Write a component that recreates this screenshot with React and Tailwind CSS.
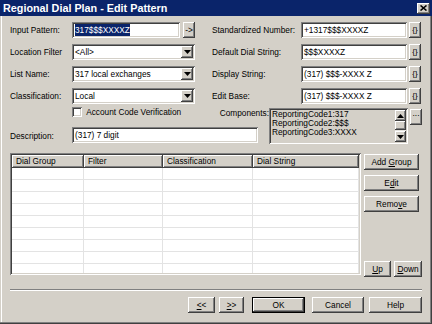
import React from 'react';

const raised = 'bg-[#d4d0c8] shadow-[inset_-1px_-1px_#404040,inset_1px_1px_#ffffff,inset_-2px_-2px_#808080,inset_2px_2px_#d4d0c8]';
const sunken = 'shadow-[inset_1px_1px_#808080,inset_-1px_-1px_#ffffff,inset_2px_2px_#404040,inset_-2px_-2px_#d4d0c8]';

function Btn({ className = '', children }) {
  return (
    <div className={`${raised} flex items-center justify-center h-[16px] ${className}`}>
      <span className="whitespace-pre">{children}</span>
    </div>
  );
}

function Arrow({ up }) {
  return (
    <svg width="7" height="4" viewBox="0 0 7 4">
      <path d={up ? 'M3.5 0 L7 4 L0 4 Z' : 'M0 0 L7 0 L3.5 4 Z'} fill="#000" />
    </svg>
  );
}

function TextBox({ className = '', children }) {
  return (
    <div className={`${sunken} bg-white h-[16px] flex items-center px-[3px] whitespace-nowrap overflow-hidden ${className}`}>
      {children}
    </div>
  );
}

function Select({ value }) {
  return (
    <div className={`${sunken} bg-white h-[16px] w-[123px] flex items-center pl-[3px] pr-[2px]`}>
      <span className="flex-1">{value}</span>
      <div className={`${raised} w-[12px] h-[12px] flex items-center justify-center`}>
        <Arrow />
      </div>
    </div>
  );
}

const rightRows = [
  ['Standardized Number:', '+1317$$$XXXXZ'],
  ['Default Dial String:', '$$$XXXXZ'],
  ['Display String:', '(317) $$$-XXXX Z'],
  ['Edit Base:', '(317) $$$-XXXX Z'],
];

const columns = [
  ['Dial Group', 'w-[72px]'],
  ['Filter', 'w-[79px]'],
  ['Classification', 'w-[90px]'],
  ['Dial String', 'w-[106px]'],
];

export default function App() {
  const leftRows = [
    ['Input Pattern:', (
      <div className="flex items-center gap-[3px]">
        <TextBox className="w-[108px]">
          <span className="bg-[#0a246a] text-white">317$$$XXXXZ</span>
        </TextBox>
        <Btn className="w-[12px] h-[15px]">-&gt;</Btn>
      </div>
    )],
    ['Location Filter', <Select value="<All>" />],
    ['List Name:', <Select value="317 local exchanges" />],
    ['Classification:', <Select value="Local" />],
  ];

  return (
    <div className="w-[432px] h-[324px] bg-[#d4d0c8] font-['Liberation_Sans',Arial,sans-serif] text-[8.3px] text-black overflow-hidden shadow-[inset_-1px_-1px_#404040,inset_-2px_-2px_#808080,inset_1px_1px_#d4d0c8,inset_2px_2px_#ffffff]">
      {/* title bar */}
      <div className="h-[16px] bg-[#0a246a] flex items-center justify-between pl-[3px] pr-[2px]">
        <span className="text-white font-bold text-[10.8px]">Regional Dial Plan - Edit Pattern</span>
        <div className={`${raised} w-[13px] h-[11px] flex items-center justify-center`}>
          <svg width="7" height="6" viewBox="0 0 7 6">
            <path d="M0.5 0.5 L6.5 5.5 M6.5 0.5 L0.5 5.5" stroke="#000" strokeWidth="1.6" />
          </svg>
        </div>
      </div>

      <div className="pl-[10px] pr-[10px]">
        {/* top field rows */}
        <div className="mt-[6px] flex flex-col gap-[6px]">
          {leftRows.map(([label, control], i) => (
            <div key={label} className="flex items-center h-[16px]">
              <div className="w-[62px]">{label}</div>
              <div className="w-[140px]">{control}</div>
              <div className="w-[89px]">{rightRows[i][0]}</div>
              <TextBox className="w-[106px]">{rightRows[i][1]}</TextBox>
              <Btn className="w-[12px] ml-[2px] text-[8px]">{'{}'}</Btn>
            </div>
          ))}
        </div>

        {/* checkbox, description, components */}
        <div className="flex mt-[2px]">
          <div className="w-[259px] flex flex-col">
            <div className="flex items-start h-[21px] pt-[1px]">
              <div className="w-[63px]" />
              <div className={`${sunken} bg-white w-[10px] h-[10px]`} />
              <span className="ml-[4px] w-[135px] leading-[10px]">Account Code Verification</span>
              <span className="leading-[10px] mt-[1px]">Components:</span>
            </div>
            <div className="flex items-center h-[16px]">
              <div className="w-[62px] mt-[2px]">Description:</div>
              <TextBox className="w-[186px]">(317) 7 digit</TextBox>
            </div>
          </div>
          <div className="flex items-start mt-[2px]">
            <div className={`${sunken} w-[139px] h-[36px] flex pl-[3px] pr-[2px] py-[2px]`}>
              <div className="flex-1 flex flex-col leading-[9px]">
                <span>ReportingCode1:317</span>
                <span>ReportingCode2:$$$</span>
                <span>ReportingCode3:XXXX</span>
              </div>
              <div className="w-[11px] flex flex-col bg-[#e8e6e1]">
                <div className={`${raised} h-[11px] flex items-center justify-center`}><Arrow up /></div>
                <div className={`${raised} h-[9px]`} />
                <div className="flex-1" />
                <div className={`${raised} h-[11px] flex items-center justify-center`}><Arrow /></div>
              </div>
            </div>
            <Btn className="w-[12px] h-[13px] ml-[2px] mt-[1px] items-start leading-[8px]">...</Btn>
          </div>
        </div>

        {/* table + side buttons */}
        <div className="flex mt-[9px] gap-[3px]">
          <div className={`${sunken} w-[351px] h-[122px] p-[2px] flex flex-col`}>
            <div className="flex h-[13px]">
              {columns.map(([name, w]) => (
                <div key={name} className={`${raised} ${w} flex items-center pl-[4px]`}>{name}</div>
              ))}
            </div>
            <div className="h-[105px] bg-white overflow-hidden">
              {Array.from({ length: 9 }).map((_, r) => (
                <div key={r} className="flex h-[12px] border-b border-[#e3e3e3]">
                  {columns.map(([name, w]) => (
                    <div key={name} className={`${w} border-r border-[#e3e3e3]`} />
                  ))}
                </div>
              ))}
            </div>
          </div>
          <div className="flex flex-col w-[58px] pt-[1px]">
            <Btn className="w-[55px] h-[15px]">Add <u>G</u>roup</Btn>
            <Btn className="w-[55px] h-[15px] mt-[5px]">E<u>d</u>it</Btn>
            <Btn className="w-[55px] h-[15px] mt-[5px]">Remo<u>v</u>e</Btn>
            <div className="flex gap-[3px] mt-[49px]">
              <Btn className="w-[27px] h-[15px]"><u>U</u>p</Btn>
              <Btn className="w-[28px] h-[15px]"><u>D</u>own</Btn>
            </div>
          </div>
        </div>

        {/* separator */}
        <div className="mt-[12px] h-[2px] border-t border-[#808080] border-b border-b-white" />

        {/* bottom buttons */}
        <div className="flex mt-[6px] pl-[178px]">
          <Btn className="w-[27px]"><u>&lt;</u>&lt;</Btn>
          <Btn className="w-[25px] ml-[4px]"><u>&gt;</u>&gt;</Btn>
          <div className="w-[53px] h-[16px] ml-[8px] border border-black">
            <Btn className="w-full h-full">OK</Btn>
          </div>
          <Btn className="w-[52px] ml-[7px]">Cancel</Btn>
          <Btn className="w-[53px] ml-[5px]">Help</Btn>
        </div>
      </div>
    </div>
  );
}
